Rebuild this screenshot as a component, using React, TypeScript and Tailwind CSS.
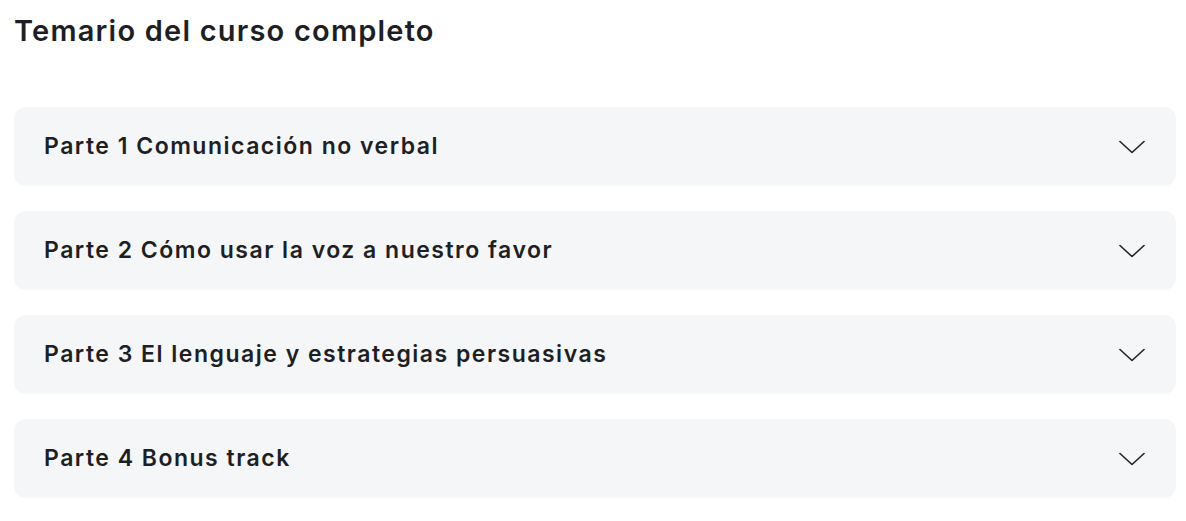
const parts = [
  "Parte 1 Comunicación no verbal",
  "Parte 2 Cómo usar la voz a nuestro favor",
  "Parte 3 El lenguaje y estrategias persuasivas",
  "Parte 4 Bonus track",
];

function Chevron() {
  return (
    <svg width="28" height="16" viewBox="0 0 28 16" fill="none" className="shrink-0">
      <path d="M2 2.5L14 13.5L26 2.5" stroke="#1f2328" strokeWidth="1.6" strokeLinecap="round" strokeLinejoin="round" />
    </svg>
  );
}

export default function App() {
  return (
    <div className="min-h-screen bg-white px-[10px] pt-[12px] text-[#1d1f24]" style={{ fontFamily: "Inter, 'Liberation Sans', sans-serif" }}>
      <h2 className="pl-[4px] text-[29px] font-semibold leading-[38px] tracking-[1.2px]">Temario del curso completo</h2>
      <div className="mt-[57px] flex flex-col gap-[25px] pl-[4px]">
        {parts.map((p) => (
          <button
            key={p}
            className="flex h-[79px] w-full items-center justify-between rounded-[12px] bg-[#f5f6f8] pl-[30px] pr-[30px] text-left"
          >
            <span className="text-[23px] font-semibold tracking-[1.5px]">{p}</span>
            <Chevron />
          </button>
        ))}
      </div>
    </div>
  );
}
